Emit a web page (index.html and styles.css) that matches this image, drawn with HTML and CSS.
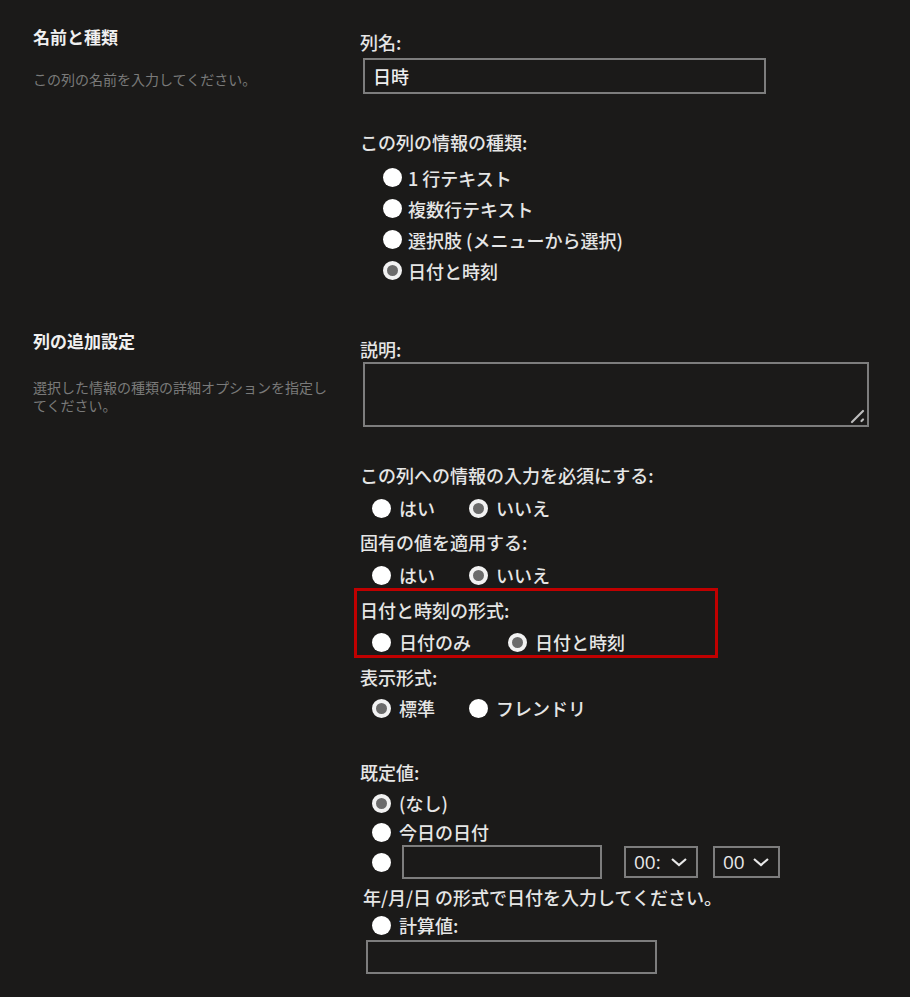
FILE: index.html
```html
<!DOCTYPE html>
<html lang="ja">
<head>
    <meta charset="UTF-8">
    <meta name="viewport" content="width=device-width, initial-scale=1.0">
    <title>列の作成</title>
    <link rel="stylesheet" href="styles.css">
</head>
<body>

    <section class="section first">
        <div class="info">
            <h3>名前と種類</h3>
            <p>この列の名前を入力してください。</p>
        </div>
        <div class="fields">
            <label class="question" for="colname">列名:</label>
            <input class="text name" type="text" id="colname" value="日時">

            <div class="question spaced">この列の情報の種類:</div>
            <div class="type-list">
                <div class="radio"><span class="dot"></span>1&nbsp;行テキスト</div>
                <div class="radio"><span class="dot"></span>複数行テキスト</div>
                <div class="radio"><span class="dot"></span>選択肢 (メニューから選択)</div>
                <div class="radio"><span class="dot on"></span>日付と時刻</div>
            </div>
        </div>
    </section>

    <section class="section second">
        <div class="info">
            <h3>列の追加設定</h3>
            <p>選択した情報の種類の詳細オプションを指定してください。</p>
        </div>
        <div class="fields">
            <label class="question" for="desc">説明:</label>
            <div class="area-wrap">
                <textarea class="text desc" id="desc"></textarea>
                <svg class="grip" width="16" height="16" viewBox="0 0 16 16">
                    <path d="M3 14 L14 3" stroke="#bdbdbd" stroke-width="2.2" stroke-linecap="round"/>
                    <path d="M12.5 13 L14 11.5" stroke="#bdbdbd" stroke-width="2.2" stroke-linecap="round"/>
                </svg>
            </div>

            <div class="question spaced">この列への情報の入力を必須にする:</div>
            <div class="options">
                <div class="radio"><span class="dot"></span>はい</div>
                <div class="radio"><span class="dot on"></span>いいえ</div>
            </div>

            <div class="question">固有の値を適用する:</div>
            <div class="options">
                <div class="radio"><span class="dot"></span>はい</div>
                <div class="radio"><span class="dot on"></span>いいえ</div>
            </div>

            <div class="highlight">
                <div class="question">日付と時刻の形式:</div>
                <div class="options">
                    <div class="radio"><span class="dot"></span>日付のみ</div>
                    <div class="radio"><span class="dot on"></span>日付と時刻</div>
                </div>
            </div>

            <div class="question after-box">表示形式:</div>
            <div class="options tight">
                <div class="radio"><span class="dot on"></span>標準</div>
                <div class="radio"><span class="dot"></span>フレンドリ</div>
            </div>

            <div class="question default-title">既定値:</div>
            <div class="defaults">
                <div class="radio"><span class="dot on"></span>(なし)</div>
                <div class="radio"><span class="dot"></span>今日の日付</div>
                <div class="date-row">
                    <span class="dot"></span>
                    <input class="text date" type="text">
                    <div class="select hour">00:
                        <svg width="18" height="10" viewBox="0 0 18 10"><path d="M2 2 L9 8 L16 2" fill="none" stroke="#e8e8e8" stroke-width="2.2"/></svg>
                    </div>
                    <div class="select minute">00
                        <svg width="18" height="10" viewBox="0 0 18 10"><path d="M2 2 L9 8 L16 2" fill="none" stroke="#e8e8e8" stroke-width="2.2"/></svg>
                    </div>
                </div>
                <div class="hint">年/月/日 の形式で日付を入力してください。</div>
                <div class="radio calc"><span class="dot"></span>計算値:</div>
                <input class="text formula" type="text">
            </div>
        </div>
    </section>

</body>
</html>
```

FILE: styles.css
```css
body {
    margin: 0;
    background: #1b1a19;
    color: #e6e6e6;
    font-family: "Noto Sans CJK JP", "Noto Sans", sans-serif;
}
.section {
    display: grid;
    grid-template-columns: 360px 1fr;
    align-items: start;
}
.info {
    padding-left: 33px;
}
.info h3 {
    margin: 0;
    font-size: 17px;
    line-height: 24px;
    font-weight: bold;
    color: #f0f0f0;
}
.info p {
    max-width: 300px;
    margin: 21px 0 0;
    font-size: 14px;
    line-height: 18px;
    color: #7a7a7a;
}
.second .info p {
    margin-top: 25px;
}
.first .info {
    padding-top: 25px;
}
.first .fields {
    padding-top: 30px;
}
.second .info {
    padding-top: 43px;
}
.second .fields {
    padding-top: 51px;
}
.fields {
    font-size: 18px;
    font-weight: 500;
}
.question {
    display: block;
    margin-top: 8px;
    line-height: 24px;
}
.first .question:first-child,
.second .question:first-child {
    margin-top: 0;
}
.question.spaced {
    margin-top: 36px;
}
.text {
    box-sizing: border-box;
    display: block;
    background: #1b1a19;
    border: 2px solid #7d7d7d;
    color: #eeeeee;
    font: inherit;
    padding: 0 8px;
    outline: none;
}
.name {
    width: 403px;
    height: 36px;
    margin: 4px 0 0 3px;
}
.type-list {
    margin-top: 8px;
    padding-left: 23px;
}
.type-list .radio {
    height: 31px;
    gap: 6px;
}
.radio {
    display: flex;
    align-items: center;
    gap: 8px;
    height: 28px;
}
.dot {
    flex: none;
    box-sizing: border-box;
    width: 19px;
    height: 19px;
    border-radius: 50%;
    background: #ffffff;
}
.dot.on {
    background: #6b6b6b;
    border: 4px solid #f2f2f2;
}
.area-wrap {
    position: relative;
    width: 506px;
    margin: 1px 0 0 3px;
}
.desc {
    width: 506px;
    height: 65px;
    resize: none;
}
.grip {
    position: absolute;
    right: 4px;
    bottom: 3px;
}
.options {
    display: flex;
    gap: 34px;
    margin-top: 7px;
    padding-left: 12px;
}
.options.tight {
    margin-top: 5px;
}
.highlight {
    box-sizing: border-box;
    width: 364px;
    margin: -1px 0 0 -6px;
    padding: 7px 0 0 3px;
    height: 70px;
    border: 3px solid #c00000;
}
.highlight .question {
    margin-top: 0;
}
.highlight .options {
    gap: 37px;
    margin-top: 7px;
}
.highlight .radio {
    height: 26px;
}
.question.after-box {
    margin-top: 7px;
}
.question.default-title {
    margin-top: 38px;
}
.defaults {
    margin-top: 5px;
    padding-left: 12px;
}
.defaults .radio + .radio {
    margin-top: 1px;
}
.date-row {
    display: flex;
    align-items: center;
    height: 34px;
    margin-top: -1px;
}
.date {
    width: 200px;
    height: 34px;
    margin-left: 11px;
}
.select {
    box-sizing: border-box;
    display: flex;
    align-items: center;
    justify-content: space-between;
    height: 32px;
    padding: 0 8px 0 8px;
    border: 2px solid #7d7d7d;
    font-family: "Open Sans", "Noto Sans", sans-serif;
    font-size: 19px;
    color: #e8e8e8;
}
.hour {
    width: 74px;
    margin-left: 22px;
}
.minute {
    width: 67px;
    margin-left: 15px;
}
.hint {
    margin: 6px 0 0 -9px;
    line-height: 24px;
}
.radio.calc {
    margin-top: 2px;
}
.formula {
    width: 291px;
    height: 34px;
    margin: 1px 0 0 -6px;
}
```
